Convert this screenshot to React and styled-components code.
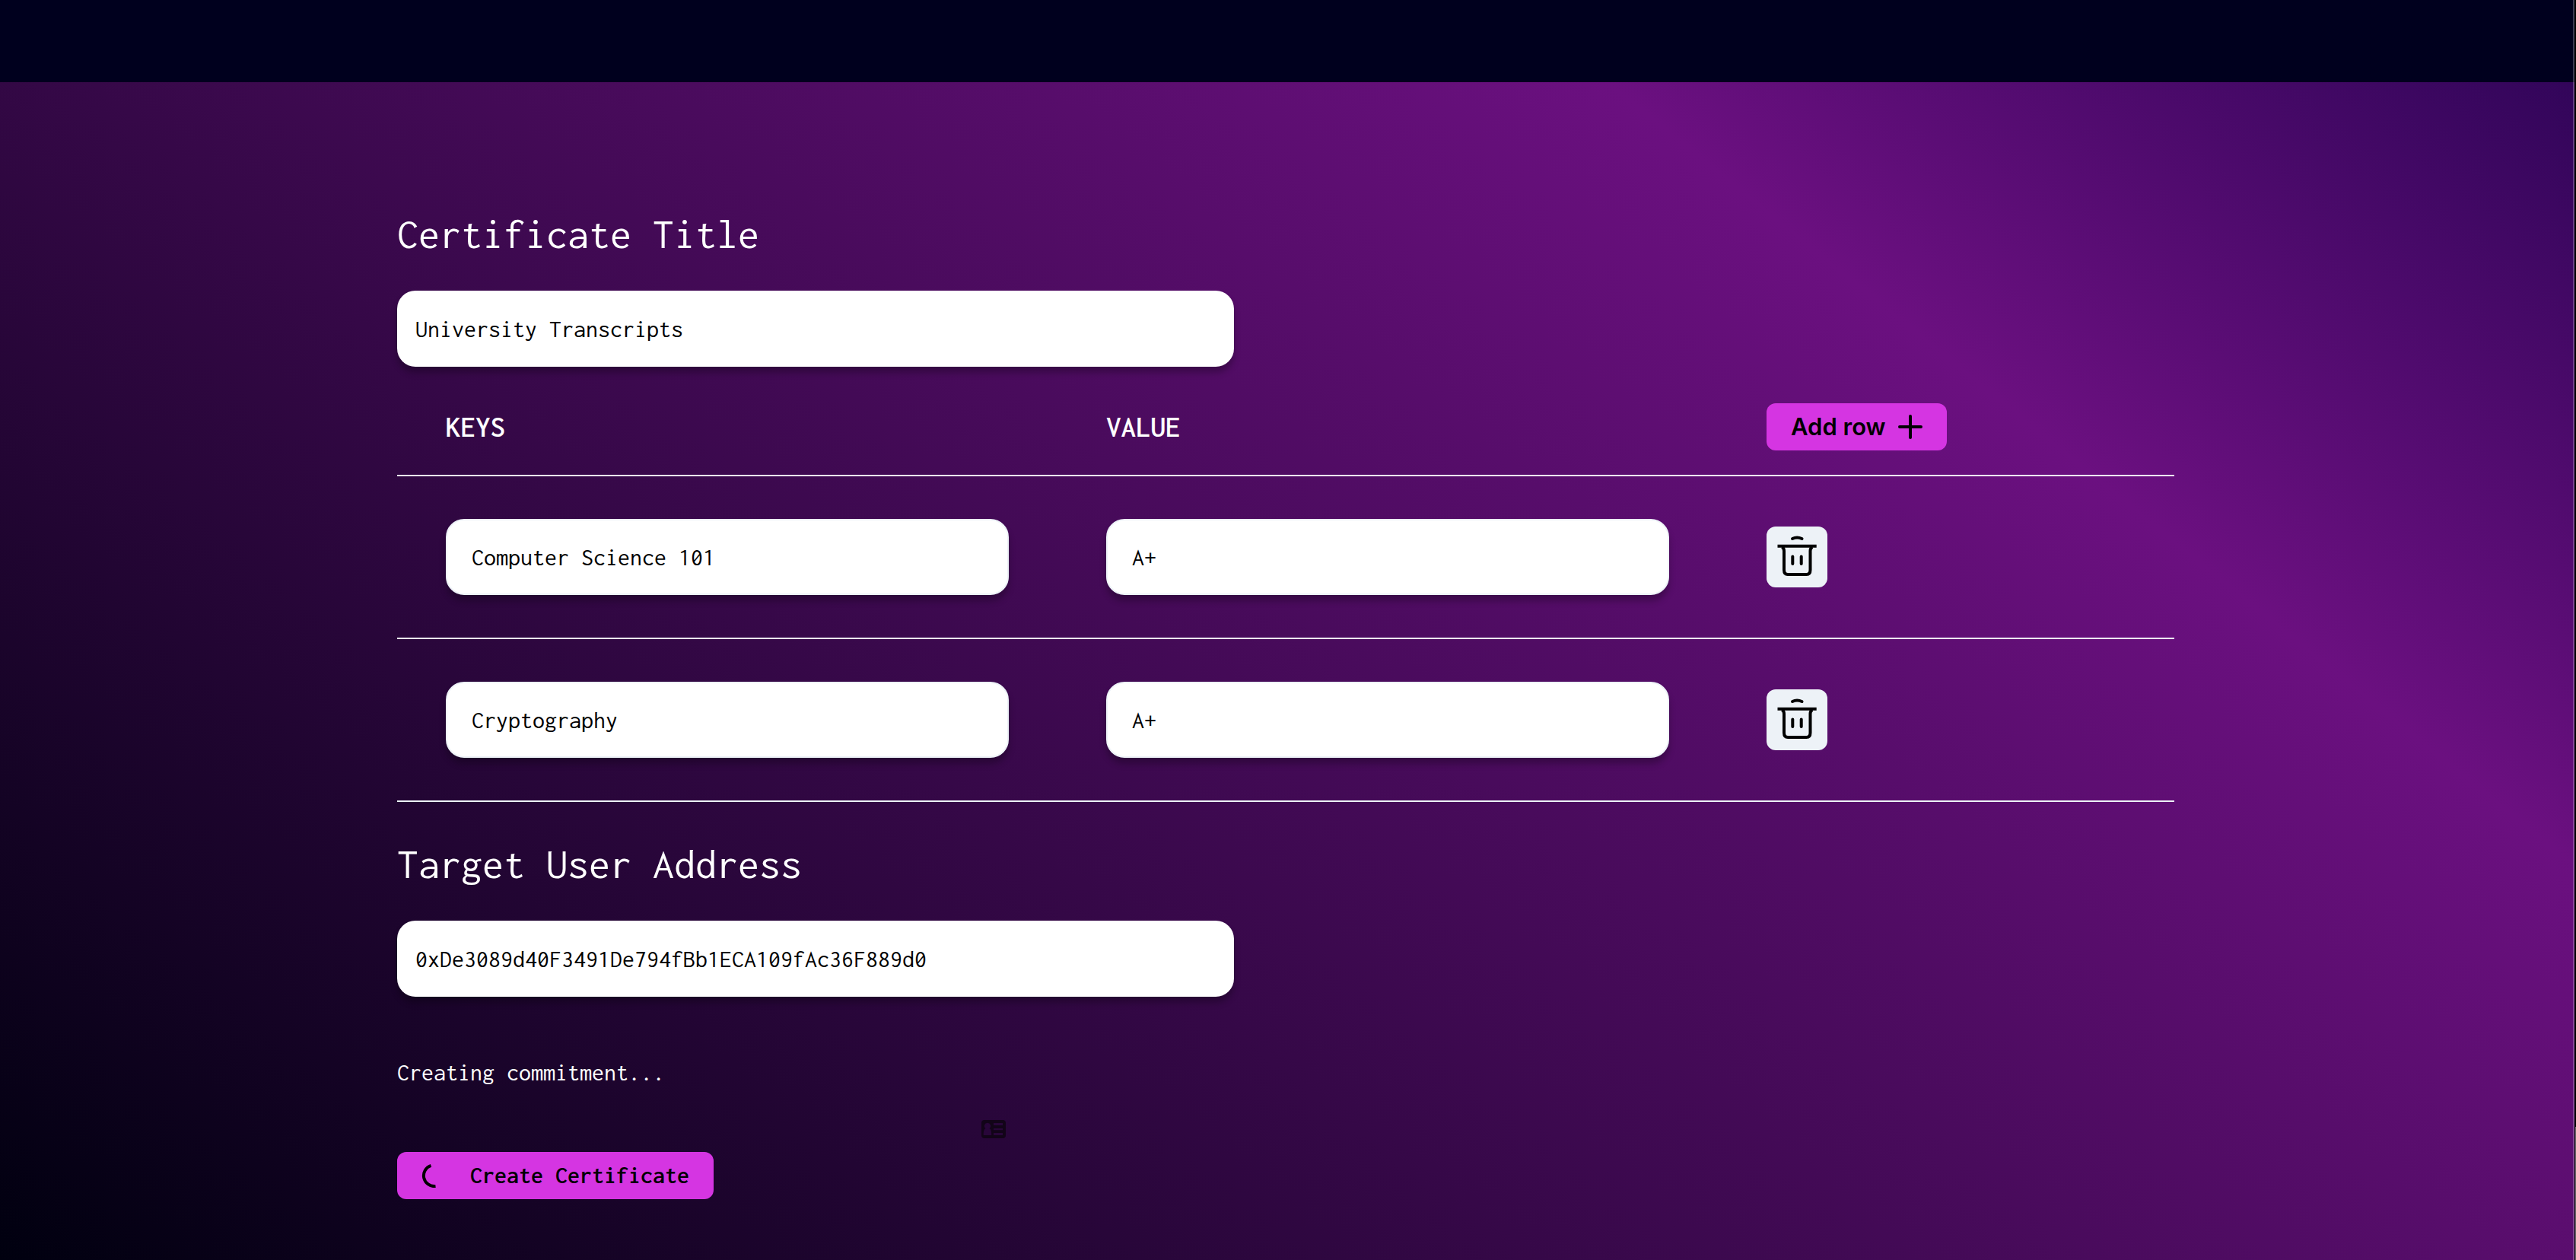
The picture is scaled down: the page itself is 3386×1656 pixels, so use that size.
import React, { useState } from 'react';
import styled, { createGlobalStyle } from 'styled-components';

const mono = '"Inconsolata", "Liberation Mono", monospace';
const sans = '"Inter", "Noto Sans", sans-serif';

const GlobalStyle = createGlobalStyle`
  *, *::before, *::after { box-sizing: border-box; }
  body {
    margin: 0;
    background: #00001e;
    color: #fff;
    font-family: ${mono};
    font-size: 32px;
    line-height: 40px;
  }
`;

const Shell = styled.div`
  display: flex;
  min-height: 100vh;
  background: #000;
`;

const Page = styled.div`
  flex: 1;
  display: flex;
  flex-direction: column;
  background: #00001e;
`;

const Divider = styled.div`
  width: 2px;
  margin-left: -2px;
  background: rgba(255, 255, 255, 0.24);
`;

const ScrollTrack = styled.div`
  width: 2px;
  display: flex;
  flex-direction: column;
  justify-content: flex-end;
  align-items: flex-end;
  background: #000;
`;

const ScrollThumb = styled.div`
  width: 1px;
  height: 175px;
  background: #6b6b6b;
`;

const TopBar = styled.header`
  height: 108px;
  background: #00001e;
`;

const Main = styled.main`
  flex: 1;
  padding: 160px 4px 80px 0;
  background: linear-gradient(39deg, #00000f 0%, #6b1080 76%, #32055a 100%);
`;

const Form = styled.form`
  width: 100%;
  max-width: 2336px;
  margin: 0 auto;
`;

const FieldLabel = styled.label`
  display: block;
  margin-bottom: 34px;
  font-size: 56px;
  line-height: 80px;
`;

const TextField = styled.input`
  display: block;
  width: 100%;
  max-width: ${p => (p.$cell ? 'none' : '1100px')};
  height: 100px;
  padding: 0 ${p => (p.$cell ? 32 : 24)}px;
  border: ${p => (p.$cell ? '2px solid #edf2f7' : '0')};
  border-radius: 24px;
  background: #fff;
  color: #000;
  font: 400 32px/40px ${mono};
  box-shadow: 0 8px 8px rgba(0, 0, 0, 0.25);
`;

const Entries = styled.table`
  width: 100%;
  margin: 16px 0 42px;
  table-layout: fixed;
  border-spacing: 0;
`;

const HeadCell = styled.th`
  width: ${p => (p.$action ? 'auto' : '868px')};
  padding: 32px 64px;
  border-bottom: 2px solid #edf2f7;
  text-align: left;
  font-size: 39px;
  font-weight: 600;
`;

const Cell = styled.td`
  padding: 56px 64px;
  border-bottom: 2px solid #edf2f7;
`;

const Button = styled.button`
  display: flex;
  align-items: center;
  height: 62px;
  padding: 0 32px;
  border: 0;
  border-radius: 12px;
  background: #d535e2;
  color: #000;
  font: 600 32px/40px ${mono};
`;

const AddButton = styled(Button)`
  gap: 8px;
  padding-right: 24px;
  font-family: ${sans};
  font-size: 31px;
`;

const CreateButton = styled(Button)`
  gap: 32px;
`;

const IconButton = styled.button`
  display: block;
  width: 80px;
  height: 80px;
  padding: 0;
  border: 0;
  border-radius: 12px;
  background: #edf2f7;
  color: #000;
`;

const Status = styled.p`
  margin: 80px 0 42px;
`;

const CardRow = styled.div`
  display: flex;
  height: 24px;
  margin-bottom: 18px;
  padding-left: 768px;
  color: #120418;
`;

const PlusIcon = () => (
  <svg width="48" height="48" viewBox="0 0 48 48" fill="none" stroke="currentColor" strokeWidth="4" strokeLinecap="round" aria-hidden="true">
    <path d="M24 10v28M10 24h28" />
  </svg>
);

const TrashIcon = () => (
  <svg width="80" height="80" viewBox="0 0 80 80" fill="none" stroke="currentColor" strokeWidth="4" aria-hidden="true">
    <path d="M14.5 25.7h51.2" />
    <path d="M20 27q3 1 3 5v25q0 6 5 6h24.500q5 0 5-6V32q0-4 3-5" />
    <path d="M34.300 39.500v9.500M45.700 39.500v9.500M34 16q6-3.200 12.500 0" strokeLinecap="round" />
  </svg>
);

const Spinner = () => (
  <svg width="32" height="32" viewBox="0 0 32 32" fill="none" stroke="currentColor" strokeWidth="4" aria-hidden="true">
    <path d="M12.500 2.800A14 14 0 0 0 18.500 30" />
  </svg>
);

const CardIcon = () => (
  <svg width="32" height="24" viewBox="0 0 32 24" fill="currentColor" aria-hidden="true">
    <path
      fillRule="evenodd"
      d="M4 0h24a4 4 0 0 1 4 4v16a4 4 0 0 1-4 4H4a4 4 0 0 1-4-4V4a4 4 0 0 1 4-4zM8 3.800a4 4 0 0 0-2.500 7.200C3.500 12 2.700 14.500 2.700 20h10.600c0-5.500-.8-8-2.800-9A4 4 0 0 0 8 3.800zM16 4v3h12V4zM16 11v2.200h12V11zM16 17v3h12v-3z"
    />
  </svg>
);

export default function App() {
  const [rows, setRows] = useState([
    { id: 1, name: 'Computer Science 101', value: 'A+' },
    { id: 2, name: 'Cryptography', value: 'A+' },
  ]);
  const edit = (id, field) => e => {
    const next = e.target.value;
    setRows(all => all.map(r => (r.id === id ? { ...r, [field]: next } : r)));
  };
  const addRow = () => setRows(all => [...all, { id: Date.now(), name: '', value: '' }]);
  const removeRow = id => setRows(all => all.filter(r => r.id !== id));

  return (
    <>
      <GlobalStyle />
      <Shell>
        <Page>
          <TopBar />
          <Main>
            <Form onSubmit={e => e.preventDefault()}>
              <FieldLabel htmlFor="title">Certificate Title</FieldLabel>
              <TextField id="title" defaultValue="University Transcripts" />
              <Entries>
                <thead>
                  <tr>
                    <HeadCell scope="col">KEYS</HeadCell>
                    <HeadCell scope="col">VALUE</HeadCell>
                    <HeadCell $action>
                      <AddButton type="button" onClick={addRow}>
                        Add row
                        <PlusIcon />
                      </AddButton>
                    </HeadCell>
                  </tr>
                </thead>
                <tbody>
                  {rows.map(row => (
                    <tr key={row.id}>
                      <Cell>
                        <TextField $cell aria-label="Key" value={row.name} onChange={edit(row.id, 'name')} />
                      </Cell>
                      <Cell>
                        <TextField $cell aria-label="Value" value={row.value} onChange={edit(row.id, 'value')} />
                      </Cell>
                      <Cell>
                        <IconButton type="button" aria-label="Delete row" onClick={() => removeRow(row.id)}>
                          <TrashIcon />
                        </IconButton>
                      </Cell>
                    </tr>
                  ))}
                </tbody>
              </Entries>
              <FieldLabel htmlFor="address">Target User Address</FieldLabel>
              <TextField id="address" defaultValue="0xDe3089d40F3491De794fBb1ECA109fAc36F889d0" />
              <Status role="status">Creating commitment...</Status>
              <CardRow>
                <CardIcon />
              </CardRow>
              <CreateButton type="submit">
                <Spinner />
                Create Certificate
              </CreateButton>
            </Form>
          </Main>
        </Page>
        <Divider />
        <ScrollTrack>
          <ScrollThumb />
        </ScrollTrack>
      </Shell>
    </>
  );
}
